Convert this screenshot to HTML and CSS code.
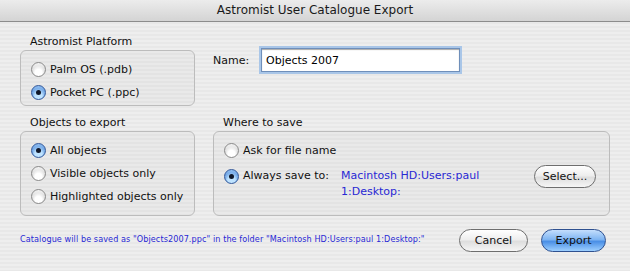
FILE: index.html
```html
<!DOCTYPE html>
<html lang="en">
<head>
    <meta charset="UTF-8">
    <title>Astromist User Catalogue Export</title>
    <link rel="stylesheet" href="styles.css">
</head>
<body>
    <div class="window">
        <div class="titlebar">Astromist User Catalogue Export</div>

        <div class="content">
            <div class="row row-top">
                <div class="group group-left">
                    <div class="legend">Astromist Platform</div>
                    <div class="box box-platform">
                        <div class="option"><span class="radio"></span>Palm OS (.pdb)</div>
                        <div class="option"><span class="radio on"></span>Pocket PC (.ppc)</div>
                    </div>
                </div>
                <div class="name-row">
                    <label class="name-label" for="name">Name:</label>
                    <input class="name-input" id="name" type="text" value="Objects 2007">
                </div>
            </div>

            <div class="row row-bottom">
                <div class="group group-left">
                    <div class="legend">Objects to export</div>
                    <div class="box box-tall">
                        <div class="option"><span class="radio on"></span>All objects</div>
                        <div class="option"><span class="radio"></span>Visible objects only</div>
                        <div class="option"><span class="radio"></span>Highlighted objects only</div>
                    </div>
                </div>
                <div class="group group-right">
                    <div class="legend">Where to save</div>
                    <div class="box box-tall box-save">
                        <div class="option"><span class="radio"></span>Ask for file name</div>
                        <div class="option option-always">
                            <span class="radio on"></span><span class="always-label">Always save to:</span>
                            <span class="path">Macintosh HD:Users:paul 1:Desktop:</span>
                            <button class="btn btn-select">Select...</button>
                        </div>
                    </div>
                </div>
            </div>

            <div class="footer">
                <div class="status">Catalogue will be saved as "Objects2007.ppc" in the folder "Macintosh HD:Users:paul 1:Desktop:"</div>
                <div class="buttons">
                    <button class="btn btn-cancel">Cancel</button>
                    <button class="btn btn-default">Export</button>
                </div>
            </div>
        </div>
    </div>
</body>
</html>
```

FILE: styles.css
```css
body {
    margin: 0;
    font-family: "DejaVu Sans", sans-serif;
    font-size: 11px;
    color: #111;
}
.window {
    width: 630px;
    height: 271px;
    background: repeating-linear-gradient(#eeeeee 0 2px, #e8e8e8 2px 4px);
    overflow: hidden;
}
.titlebar {
    height: 21px;
    line-height: 21px;
    text-align: center;
    font-size: 12px;
    color: #1a1a1a;
    background: linear-gradient(#ececec, #d4d4d4);
    border-bottom: 1px solid #8c8c8c;
}
.content {
    padding: 13px 20px 0 20px;
}
.row {
    display: flex;
    gap: 18px;
}
.row-bottom {
    margin-top: 10px;
}
.group-left {
    width: 175px;
}
.group-right {
    flex: 1;
}
.legend {
    height: 14px;
    line-height: 14px;
    padding-left: 10px;
    margin-bottom: 1px;
}
.box {
    border: 1px solid #bcbcbc;
    border-radius: 6px;
    background: repeating-linear-gradient(#e9e9e9 0 2px, #e3e3e3 2px 4px);
    padding: 7px 10px 2px 10px;
    box-sizing: border-box;
}
.box-platform {
    height: 56px;
}
.box-tall {
    height: 85px;
}
.option {
    display: flex;
    align-items: center;
    height: 23px;
}
.radio {
    width: 13px;
    height: 13px;
    border-radius: 50%;
    border: 1px solid #8a8a8a;
    background: radial-gradient(circle at 50% 75%, #ffffff 0 30%, transparent 60%),
                linear-gradient(#f2f2f2, #c9c9c9);
    margin-right: 4px;
    position: relative;
    flex: none;
}
.radio.on {
    border-color: #33589a;
    background: radial-gradient(circle at 50% 80%, #bfe3ff 0 30%, transparent 65%),
                linear-gradient(#8fbdf0, #3c7fd4);
}
.radio.on::after {
    content: "";
    position: absolute;
    left: 4px;
    top: 4px;
    width: 5px;
    height: 5px;
    border-radius: 50%;
    background: #10182a;
}
.name-row {
    display: flex;
    align-items: center;
    margin-top: 13px;
    height: 24px;
}
.name-label {
    width: 48px;
}
.name-input {
    width: 199px;
    height: 24px;
    box-sizing: border-box;
    font-family: inherit;
    font-size: 11px;
    padding: 0 4px;
    border: 1px solid #6f8fba;
    box-shadow: 0 0 0 2px #a9c6e8, inset 0 1px 1px #aaa;
    outline: none;
    background: #fff;
}
.box-save .option-always {
    align-items: flex-start;
    height: auto;
    padding-top: 3px;
}
.option-always .radio,
.option-always .always-label {
    margin-top: 4px;
}
.always-label {
    width: 98px;
}
.path {
    color: #2828d4;
    width: 150px;
    line-height: 16px;
    margin-top: 3px;
}
.btn {
    font-family: inherit;
    font-size: 11px;
    color: #111;
    height: 23px;
    border-radius: 12px;
    border: 1px solid #6e6e6e;
    background: linear-gradient(#ffffff, #eeeeee 45%, #dedede 55%, #f6f6f6);
    padding: 0;
}
.btn-select {
    margin-left: auto;
    margin-right: 3px;
    width: 62px;
}
.footer {
    display: flex;
    align-items: center;
    margin-top: 13px;
    padding-right: 4px;
}
.status {
    font-family: "DejaVu Sans Condensed", "DejaVu Sans", sans-serif;
    font-size: 9px;
    letter-spacing: 0.08px;
    white-space: nowrap;
    color: #2828d4;
    flex: 1;
    margin-top: -4px;
}
.buttons {
    display: flex;
    gap: 13px;
}
.btn-cancel {
    width: 69px;
}
.btn-default {
    width: 65px;
    border-color: #2f5190;
    background: linear-gradient(#c4defc, #7fb5f2 45%, #4a8fe6 55%, #9ed0ff);
}
```
